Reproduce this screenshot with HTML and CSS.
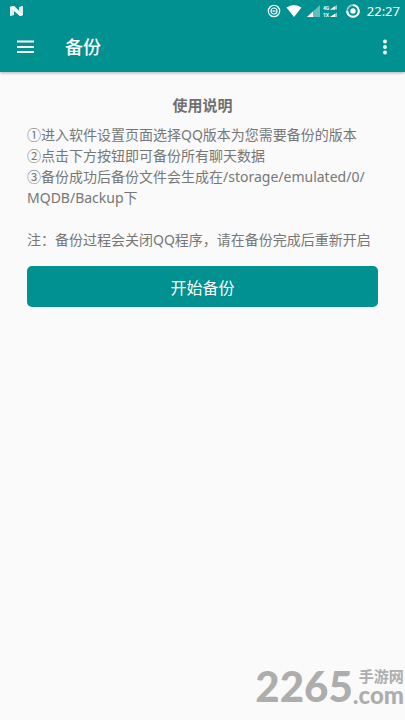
FILE: index.html
```
<!DOCTYPE html>
<html lang="zh-CN">
<head>
<meta charset="utf-8">
<meta name="viewport" content="width=device-width, initial-scale=1">
<title>备份</title>
<link rel="stylesheet" href="styles.css">
</head>
<body>
<header class="top">
  <div class="status">
    <svg class="n-logo" width="14" height="12" viewBox="0 0 14 12" aria-hidden="true">
      <path d="M0 2l3-1v9l-3 1zM10 2l3-1v9l-3 1z" fill="#a5d9d5"/>
      <path d="M0 2l4-1 5 5V2l4-1v9l-3 1-6-5v4l-4 1z" fill="#d9f0ee"/>
      <path d="M0 2l4-1 9 9-3 1z" fill="#fff"/>
    </svg>
    <div class="status-icons">
      <svg width="102" height="16" viewBox="0 0 102 16" aria-hidden="true">
        <g fill="none" stroke="#fff">
          <circle cx="9" cy="8" r="5.700" stroke-width="1.200"/>
          <circle cx="9" cy="8" r="3" stroke-width="1.200"/>
          <path d="M7.500 8h3" stroke-width="1.200"/>
        </g>
        <path d="M21.500 4.500Q29 -.5 36.500 4.500L29 14z" fill="#fff"/>
        <path d="M42 14L55 2v12z" fill="#66bcb8"/>
        <path d="M42 14l6-5.500V14z" fill="#fff"/>
        <g class="net">
          <text x="58" y="7">4G</text>
          <text x="58" y="14">1X</text>
        </g>
        <path d="M65 6.500l7-4.500v4.500zM65 14l7-4.500v4.500z" fill="#8fd0cc"/>
        <path d="M65 6.500l5-3.200v3.200zM65 14l5-3.200v3.200z" fill="#fff"/>
        <circle cx="88" cy="8" r="5.800" fill="none" stroke="#8fd0cc" stroke-width="1.800"/>
        <path d="M88 2.200A5.800 5.800 0 1 1 82.200 8" fill="none" stroke="#fff" stroke-width="2"/>
        <circle cx="88" cy="8" r="2.700" fill="#fff"/>
      </svg>
      <time class="clock">22:27</time>
    </div>
  </div>
  <div class="appbar">
    <button class="icon-button" type="button" aria-label="菜单">
      <svg width="18" height="14" viewBox="0 0 18 14"><path d="M1 1.500h17M1 7h17M1 12h17" stroke="#fff" stroke-width="1.800"/></svg>
    </button>
    <h1 class="title">备份</h1>
    <button class="icon-button" type="button" aria-label="更多选项">
      <svg width="6" height="16" viewBox="0 0 6 16" fill="#fff"><circle cx="3" cy="2.500" r="1.900"/><circle cx="3" cy="8" r="1.900"/><circle cx="3" cy="13.500" r="1.900"/></svg>
    </button>
  </div>
</header>
<main class="content">
  <h2 class="heading">使用说明</h2>
  <p class="text">①进入软件设置页面选择QQ版本为您需要备份的版本<br>②点击下方按钮即可备份所有聊天数据<br>③备份成功后备份文件会生成在/storage/emulated/0/<br>MQDB/Backup下</p>
  <p class="text">注：备份过程会关闭QQ程序，请在备份完成后重新开启</p>
  <button class="start" type="button">开始备份</button>
</main>
<div class="watermark">
  <span class="mark-number">2265</span>
  <span class="mark-side"><span class="mark-name">手游网</span><span class="mark-domain">.com</span></span>
</div>
</body>
</html>
```
FILE: styles.css
```
* {
  box-sizing: border-box;
}

body {
  margin: 0;
  min-height: 100vh;
  background: #fafafa;
  color: #777;
  font-family: "Noto Sans", "Noto Sans CJK SC", sans-serif;
}

button {
  border: 0;
  padding: 0;
  color: #fff;
  font-family: inherit;
}

.top {
  background: #009190;
  color: #fff;
  box-shadow: 0 1px 3px rgba(0, 0, 0, 0.3);
}

.status {
  display: flex;
  align-items: center;
  justify-content: space-between;
  height: 22px;
  padding: 0 5px 0 10px;
}

.status-icons {
  display: flex;
  align-items: center;
}

.net {
  fill: #fff;
  font: bold 5px Roboto, sans-serif;
}

.clock {
  font-size: 13px;
  line-height: 22px;
}

.appbar {
  display: flex;
  align-items: center;
  height: 50px;
  padding: 0 12px 0 9px;
}

.icon-button {
  display: flex;
  align-items: center;
  justify-content: center;
  width: 32px;
  height: 40px;
  background: none;
}

.icon-button:last-child {
  width: 16px;
}

.title {
  flex: 1;
  margin: 0 0 0 24px;
  font-size: 18px;
  font-weight: 500;
  line-height: 24px;
}

.content {
  padding: 23px 27px;
}

.heading {
  margin: 0 0 8px;
  color: #707070;
  font-size: 15px;
  font-weight: 700;
  line-height: 21px;
  text-align: center;
}

.text {
  margin: 0 0 21px;
  font-size: 14px;
  line-height: 21px;
}

.text:last-of-type {
  margin-bottom: 16px;
}

.start {
  display: block;
  width: 100%;
  height: 41px;
  border-radius: 5px;
  background: #009190;
  font-size: 16px;
}

.watermark {
  position: absolute;
  right: 1px;
  bottom: 10px;
  display: flex;
  align-items: center;
  color: #adadad;
  font-family: Lato, "Noto Sans CJK SC", sans-serif;
  font-weight: 900;
}

.mark-number {
  font-size: 42px;
  line-height: 48px;
}

.mark-side {
  display: flex;
  flex-direction: column;
}

.mark-name {
  padding-left: 6px;
  font-size: 15px;
  font-weight: 700;
  line-height: 18px;
}

.mark-domain {
  font-size: 24px;
  line-height: 20px;
}
```
